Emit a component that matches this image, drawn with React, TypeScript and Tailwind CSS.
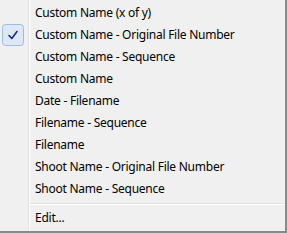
import React from 'react';

const items = [
  { label: 'Custom Name (x of y)' },
  { label: 'Custom Name - Original File Number', checked: true },
  { label: 'Custom Name - Sequence' },
  { label: 'Custom Name' },
  { label: 'Date - Filename' },
  { label: 'Filename - Sequence' },
  { label: 'Filename' },
  { label: 'Shoot Name - Original File Number' },
  { label: 'Shoot Name - Sequence' },
];

// checked-state glyph: light blue rounded box with a navy tick
const Check = () => (
  <svg className="ml-[2px] shrink-0" width="22" height="22" viewBox="0 0 22 22" fill="none">
    <rect x="0.5" y="0.5" width="21" height="21" rx="3" fill="#dce8f6" stroke="#9cbde3" />
    <path d="M7 11.5 L9.8 14.5 L15 7.5" stroke="#1b2a78" strokeWidth="1.6" strokeLinecap="round" strokeLinejoin="round" />
  </svg>
);

const Row = ({ label, checked }: { label: string; checked?: boolean }) => (
  <div className="flex h-[22px]">
    <div className="w-[29px] shrink-0 flex items-center border-r border-[#e0e0e0]">
      {checked ? <Check /> : null}
    </div>
    <div className="flex-1 flex items-center pl-[5px] pb-px border-l border-white text-[12px] tracking-[-0.25px] text-black">
      {label}
    </div>
  </div>
);

export default function App() {
  return (
    <div
      className="w-[287px] h-[233px] bg-[#f0f0f0] border-r-2 border-b-2 border-[#8a8a8a] flex flex-col"
      style={{ fontFamily: '"Noto Sans", sans-serif' }}
    >
      <div className="flex h-[2px]">
        <div className="w-[29px] border-r border-[#e0e0e0]" />
        <div className="flex-1 border-l border-white" />
      </div>
      {items.map((it) => (
        <Row key={it.label} label={it.label} checked={it.checked} />
      ))}
      <div className="flex h-[7px]">
        <div className="w-[29px] shrink-0 border-r border-[#e0e0e0]" />
        <div className="flex-1 flex flex-col justify-center pr-[1px] border-l border-white">
          <div className="h-px bg-[#e0e0e0]" />
          <div className="h-px bg-white" />
        </div>
      </div>
      <Row label="Edit..." />
      <div className="flex flex-1">
        <div className="w-[29px] border-r border-[#e0e0e0]" />
        <div className="flex-1 border-l border-white" />
      </div>
    </div>
  );
}
